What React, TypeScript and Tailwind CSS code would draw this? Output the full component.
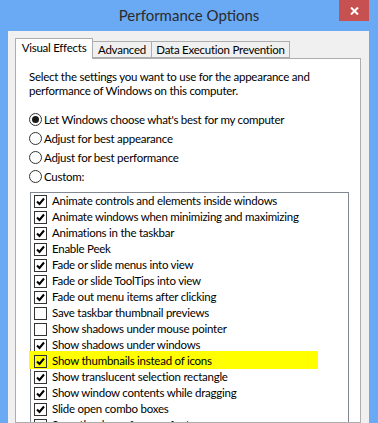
import React from 'react';

const effects: { label: string; checked: boolean; highlight?: boolean }[] = [
  { label: 'Animate controls and elements inside windows', checked: true },
  { label: 'Animate windows when minimizing and maximizing', checked: true },
  { label: 'Animations in the taskbar', checked: true },
  { label: 'Enable Peek', checked: true },
  { label: 'Fade or slide menus into view', checked: true },
  { label: 'Fade or slide ToolTips into view', checked: true },
  { label: 'Fade out menu items after clicking', checked: true },
  { label: 'Save taskbar thumbnail previews', checked: false },
  { label: 'Show shadows under mouse pointer', checked: false },
  { label: 'Show shadows under windows', checked: true },
  { label: 'Show thumbnails instead of icons', checked: true, highlight: true },
  { label: 'Show translucent selection rectangle', checked: true },
  { label: 'Show window contents while dragging', checked: true },
  { label: 'Slide open combo boxes', checked: true },
  { label: 'Smooth edges of screen fonts', checked: true },
];

const radios = [
  { label: "Let Windows choose what's best for my computer", selected: true },
  { label: 'Adjust for best appearance', selected: false },
  { label: 'Adjust for best performance', selected: false },
  { label: 'Custom:', selected: false },
];

const CheckBox: React.FC<{ checked: boolean }> = ({ checked }) => (
  <span className="w-[13px] h-[13px] border border-[#333333] flex items-center justify-center shrink-0">
    {checked && (
      <svg width="9" height="9" viewBox="0 0 9 9">
        <path d="M1 4.5 L3.5 7 L8 1.5" fill="none" stroke="#000" strokeWidth="2" />
      </svg>
    )}
  </span>
);

const Radio: React.FC<{ selected: boolean }> = ({ selected }) => (
  <span className="w-[13px] h-[13px] rounded-full border border-[#333333] bg-white flex items-center justify-center shrink-0">
    {selected && <span className="w-[7px] h-[7px] rounded-full bg-[#1a1a1a]" />}
  </span>
);

const App: React.FC = () => {
  return (
    <div className="w-[378px] h-[423px] bg-[#6aa9f4] flex flex-col overflow-hidden font-['Lato','Liberation_Sans',sans-serif] text-[11.5px] tracking-[-0.25px] text-black">
      {/* title bar */}
      <div className="h-[31px] flex shrink-0">
        <div className="flex-1 pl-[39px] h-full flex items-center justify-center text-[15px] tracking-normal text-[#2b2b2b]">
          Performance Options
        </div>
        <div className="w-[30px] h-[21px] bg-[#c75050] flex items-center justify-center mr-[9px]">
          <svg width="9" height="8" viewBox="0 0 9 8">
            <path d="M1 0.5 L8 7.5 M8 0.5 L1 7.5" stroke="#fff" strokeWidth="2" />
          </svg>
        </div>
      </div>

      {/* client area */}
      <div className="flex-1 ml-[8px] mr-[9px] bg-[#f0f0f0] pt-[7px] pl-[7px] pr-[8px] flex flex-col min-h-0">
        <div className="flex items-end h-[20px] shrink-0">
          <div className="relative z-10 h-[21px] -mb-px w-[78px] bg-white border border-b-0 border-[#adadad] flex items-center justify-center pb-[2px]">
            Visual Effects
          </div>
          <div className="h-[17px] w-[59px] bg-[#f0f0f0] border border-l-0 border-[#adadad] flex items-center justify-center">
            Advanced
          </div>
          <div className="h-[17px] w-[138px] bg-[#f0f0f0] border border-l-0 border-[#adadad] flex items-center justify-center whitespace-nowrap">
            Data Execution Prevention
          </div>
        </div>

        <div className="flex-1 bg-white border border-[#adadad] pl-[13px] pt-[11px] overflow-hidden">
          <p className="leading-[14px] w-[300px]">
            Select the settings you want to use for the appearance and performance of Windows on this computer.
          </p>

          <div className="mt-[12px] flex flex-col">
            {radios.map((r) => (
              <div key={r.label} className="h-[19px] flex items-center gap-[2px]">
                <Radio selected={r.selected} />
                <span>{r.label}</span>
              </div>
            ))}
          </div>

          <div className="mt-[6px] ml-[1px] w-[319px] border border-[#828790]">
            {effects.map((e) => (
              <div key={e.label} className="relative h-[16px] flex items-center pl-[3px]">
                {e.highlight && (
                  <span className="absolute left-[-2px] top-[-2px] w-[289px] h-[18px] bg-[#ffff00]" />
                )}
                <span className="relative flex items-center gap-[5px]">
                  <CheckBox checked={e.checked} />
                  <span className="whitespace-nowrap">{e.label}</span>
                </span>
              </div>
            ))}
          </div>
        </div>
      </div>
    </div>
  );
};

export default App;
